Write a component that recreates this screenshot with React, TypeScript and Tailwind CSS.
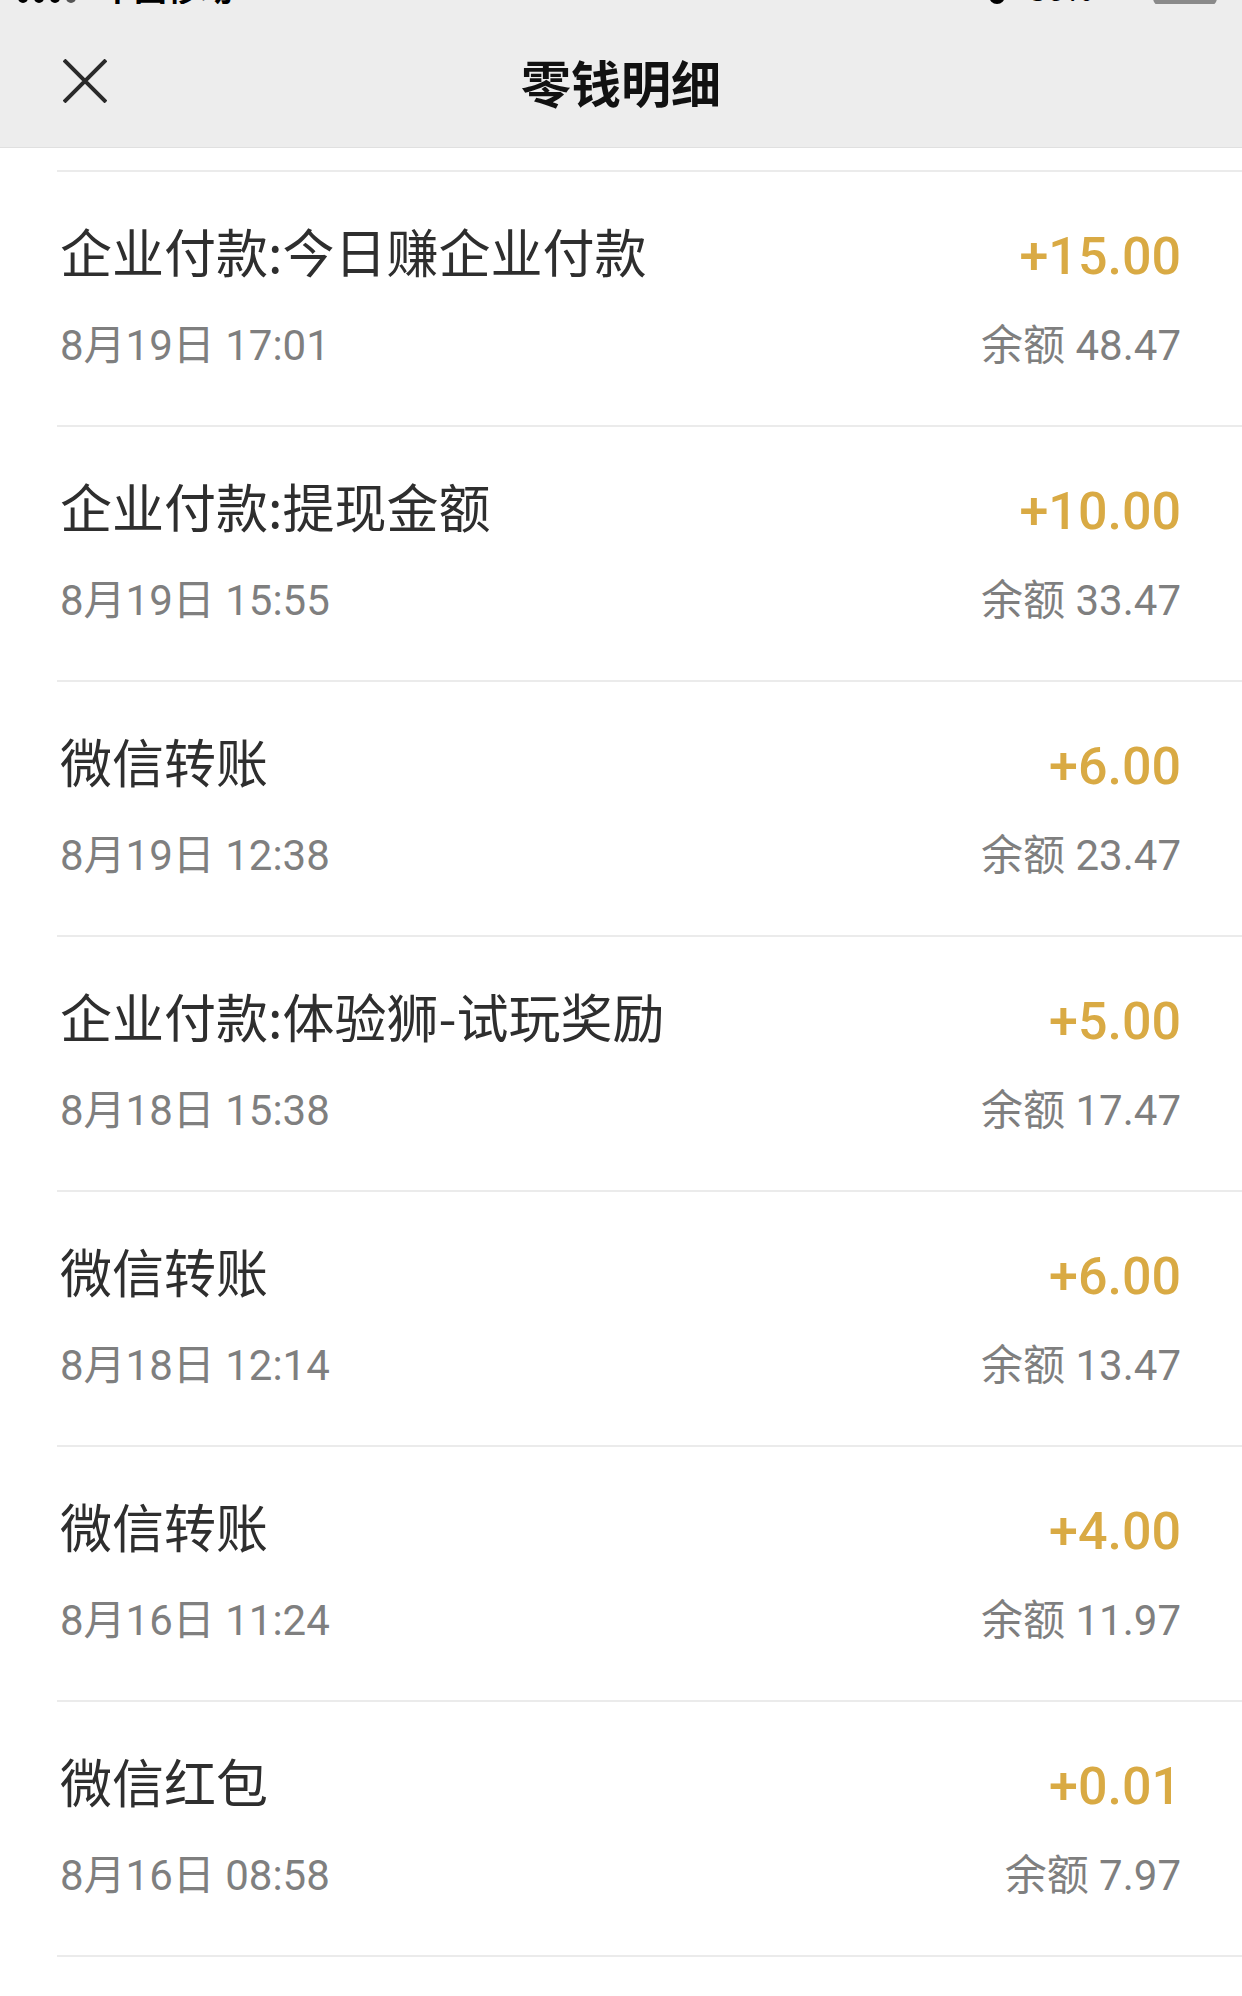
const rows = [
  { title: "企业付款:今日赚企业付款", time: "8月19日 17:01", amount: "+15.00", balance: "余额 48.47" },
  { title: "企业付款:提现金额", time: "8月19日 15:55", amount: "+10.00", balance: "余额 33.47" },
  { title: "微信转账", time: "8月19日 12:38", amount: "+6.00", balance: "余额 23.47" },
  { title: "企业付款:体验狮-试玩奖励", time: "8月18日 15:38", amount: "+5.00", balance: "余额 17.47" },
  { title: "微信转账", time: "8月18日 12:14", amount: "+6.00", balance: "余额 13.47" },
  { title: "微信转账", time: "8月16日 11:24", amount: "+4.00", balance: "余额 11.97" },
  { title: "微信红包", time: "8月16日 08:58", amount: "+0.01", balance: "余额 7.97" },
];

const cjk = { fontFamily: "'Noto Sans CJK SC', sans-serif" };
const mixed = { fontFamily: "Roboto, 'Noto Sans CJK SC', sans-serif" };

const App = () => {
  return (
    <div className="w-[1242px] min-h-[1996px] bg-white" style={cjk}>
      {/* header, status bar is scrolled mostly out of view */}
      <div className="bg-[#ededed] h-[148px] border-b border-[#e0e0e0]">
        <div className="h-[4px] overflow-hidden flex items-start pl-[18px] pr-[25px]">
          <div className="flex gap-[6px] -mt-[12px]">
            <span className="w-[10px] h-[15px] rounded-full bg-black" />
            <span className="w-[10px] h-[15px] rounded-full bg-black" />
            <span className="w-[10px] h-[15px] rounded-full bg-black" />
            <span className="w-[10px] h-[15px] rounded-full bg-[#555]" />
          </div>
          <span className="ml-[25px] text-[33px] leading-[40px] -mt-[33px] font-semibold text-black">中国移动</span>
          <div className="flex-1" />
          <span className="w-[16px] h-[16px] -mt-[12px] rounded-full bg-black" />
          <span className="ml-[24px] text-[30px] leading-[36px] -mt-[30px] font-semibold text-black">86%</span>
          <span className="ml-[60px] w-[64px] h-[30px] -mt-[24px] rounded-[8px] bg-[#8a8a8a]" />
        </div>
        <div className="flex items-center h-[144px] pt-[10px] pl-[63px] pr-[63px]">
          <svg width="44" height="44" viewBox="0 0 44 44" className="shrink-0">
            <path d="M1 1 L43 43 M43 1 L1 43" stroke="#2a2a2a" strokeWidth="4" fill="none" />
          </svg>
          <div className="flex-1 text-center text-[50px] font-bold text-[#111] leading-[60px] pr-[44px]">
            零钱明细
          </div>
        </div>
      </div>
      <div className="h-[22px]" />
      <div className="pl-[57px]">
        {rows.map((r, i) => (
          <div key={i} className="border-t-2 border-[#ebebeb]">
            <div className="flex justify-between pr-[61px] pl-[3px] pt-[49px] pb-[54px]">
              <div>
                <div className="text-[52px] leading-[60px] text-[#2e2e2e]">{r.title}</div>
                <div className="text-[42px] leading-[50px] mt-[40px] text-[#7f7f7f]" style={mixed}>
                  {r.time}
                </div>
              </div>
              <div className="text-right">
                <div
                  className="text-[52px] leading-[60px] mt-[6px] font-medium text-[#d9aa44]"
                  style={{ fontFamily: "Roboto, sans-serif" }}
                >
                  {r.amount}
                </div>
                <div className="text-[42px] leading-[50px] mt-[34px] text-[#7f7f7f]" style={mixed}>
                  {r.balance}
                </div>
              </div>
            </div>
          </div>
        ))}
        <div className="border-t-2 border-[#ebebeb]" />
      </div>
    </div>
  );
};

export default App;
